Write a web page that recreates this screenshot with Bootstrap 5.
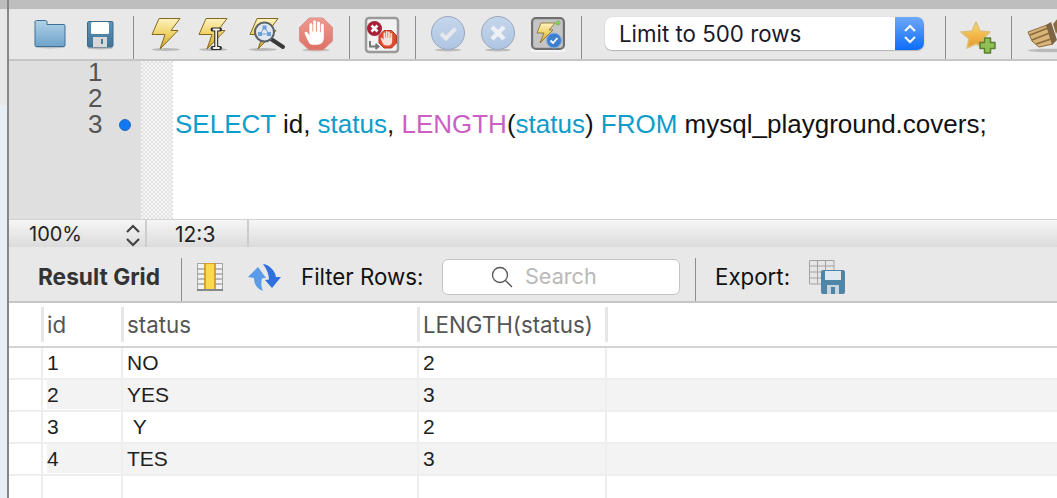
<!DOCTYPE html>
<html lang="en"><head><meta charset="utf-8"><title>Query</title>
<link href="https://cdn.jsdelivr.net/npm/bootstrap@5.3.0/dist/css/bootstrap.min.css" rel="stylesheet">
<style>
html,body{height:498px;overflow:hidden;background:#fff;font-family:"Liberation Sans",Arial,sans-serif;color:#111}
.shell{height:498px}
.sidestrip{width:7px;background:#e8eef5;background-image:linear-gradient(#bdbdbd 9px,#e8e8e8 9px,#e8e8e8 105px,#e8eef5 105px)}
.sideline{width:2px;background:#85878a}
.workarea{width:1048px;overflow:hidden}
.topbar{height:9px;background:#bebebe}
.tools{height:50px;background:#e8e8e8;padding-left:24px;gap:16px}
.slot{width:34px;height:40px;flex:none;overflow:visible;display:block}
.tsep{width:1px;margin:0 -.5px;background:#8e8e8e;height:43px;align-self:flex-end;flex:none}
.limitbox{width:319px;height:33px;flex:none;margin-left:8px;margin-right:5px;background:#fff;border-radius:7px;box-shadow:0 1px 1px #b5b5b5,0 0 1px #bbb;font-family:Inter,"Liberation Sans",sans-serif;font-size:22.3px;overflow:hidden;color:#1a1a2a}
.limitbox span{padding-left:14px}
.limitarrow{width:29px;background:linear-gradient(#6ea8f8,#0c6dfb)}
.graybar{height:2px;background:#c6c6c6}
.editor{height:159px}
.gutter{width:132px;background:#dfdfdf;color:#555;font-size:26px;line-height:22px}
.gutnum{height:26px;padding-left:79px}
.gutdot{width:12px;height:12px;border-radius:50%;background:#0f78f2;margin-left:17px;margin-top:6px;border:1px solid #2a6cb8}
.checker{width:32px;background-color:#f2f2f2;background-image:conic-gradient(#e2e2e2 25%,#f6f6f6 0 50%,#e2e2e2 0 75%,#f6f6f6 0);background-size:4px 4px}
.sqlcode{font-size:26px;line-height:26px;padding:50px 0 0 2px;white-space:nowrap;color:#111}
.kw{color:#0e9ccb}.fn{color:#cc5fc4}
.statusbar{height:28px;background:linear-gradient(#f6f6f6,#dcdcdc);border-top:1px solid #d2d2d2;font-family:Inter,"Liberation Sans",sans-serif;font-size:20px;line-height:27px;color:#222}
.zoomcell{width:138px;padding:2px 0 0 20px;border-right:2px solid #cdcdcd}
.poscell{width:102px;padding:1px 0 0 28px;font-size:21px;border-right:2px solid #cdcdcd}
.resultbar{height:54px;background:#e8e8e8;padding-top:5px;font-family:Inter,"Liberation Sans",sans-serif;font-size:22.3px;color:#111}
.rtitle{font-weight:700;font-size:22.7px;color:#333;margin-left:29px;width:143px;flex:none}
.rsep{width:1px;height:43px;background:#8e8e8e;align-self:flex-end;flex:none}
.gridglyph{margin-left:15px}
.syncglyph{margin-left:25px}
.filterlabel{margin-left:19px;width:141px}
.searchbox{width:238px;height:36px;background:#fff;border:1px solid #c4c4c4;border-radius:6px;margin-right:15px;padding-left:47px;gap:11px;color:#b9b9b9;font-size:21.6px;flex:none}
.exportlabel{margin-left:19px;width:94px}
.resultgrid{table-layout:fixed;width:1048px;border-collapse:separate;border-spacing:0;font-size:21px;color:#1f1f1f}
.resultgrid th{font-family:Inter,"Liberation Sans",sans-serif;font-size:22.3px;font-weight:400;color:#555;height:45px;padding:4px 0 0;vertical-align:top;border-bottom:2px solid #d4d4d4}
.headcell{height:35px;line-height:35px;padding-left:4px;border-right:3px solid #e6e6e6;margin-right:-1px;white-space:nowrap}
.resultgrid td{height:32px;padding:0 0 1px 4px;line-height:28px;border-right:2px solid #eee;border-bottom:2px solid #eee}
.resultgrid td:first-child{padding:0}
.resultgrid td.lastcol{border-right:0}
.resultgrid tr.alt td{background:#f3f3f3}
.resultgrid tr.alt td:first-child{background:#fff}
.resultgrid tr.alt td.idcell{background:#f3f3f3;background-clip:content-box}
.resultgrid tr.emptyrow td{border-bottom:0;height:22px}
.defsvg{width:0;height:0;display:block}
</style></head><body>
<svg class="defsvg" aria-hidden="true"><defs>
<linearGradient id="gBolt" x1="0" y1="0" x2="0" y2="1"><stop offset="0" stop-color="#fdf3c0"/><stop offset=".5" stop-color="#f0d26a"/><stop offset="1" stop-color="#cfa02c"/></linearGradient>
<linearGradient id="gFolder" x1="0" y1="0" x2="0" y2="1"><stop offset="0" stop-color="#b3d2e8"/><stop offset="1" stop-color="#6ea3ca"/></linearGradient>
<linearGradient id="gDisk" x1="0" y1="0" x2="0" y2="1"><stop offset="0" stop-color="#5f94b6"/><stop offset="1" stop-color="#3f7497"/></linearGradient>
<linearGradient id="gRound" x1="0" y1="0" x2="0" y2="1"><stop offset="0" stop-color="#c5d6ec"/><stop offset="1" stop-color="#aec5e2"/></linearGradient>
<linearGradient id="gStop" x1="0" y1="0" x2="0" y2="1"><stop offset="0" stop-color="#ee9a90"/><stop offset="1" stop-color="#de7166"/></linearGradient>
<linearGradient id="gStar" x1="0" y1="0" x2="0" y2="1"><stop offset="0" stop-color="#fbd96e"/><stop offset="1" stop-color="#e8982a"/></linearGradient>
<path id="pBolt" d="M10 4.500H31L22 16.500H29L11 35L16 20.500H3Z"/>
<path id="pHand" d="M-6 7C-8 3-9.500 0-9.500-1C-9-2.500-7.500-2-6.500-.5L-5.500 1V-7.500C-5.500-9.500-3-9.500-3-7.500V-2H-2.300V-10C-2.300-12-.2-12 0-10V-2H.8V-9C.8-11 3.300-11 3.300-9V-1.500H4V-7C4-9 6.500-9 6.500-7V3C6.500 7 4 9 1 9H-2C-4 9-5 8.500-6 7Z"/>
</defs></svg>
<div class="shell d-flex">
<div class="sidestrip flex-none"></div><div class="sideline flex-none"></div>
<div class="workarea d-flex flex-column">
<div class="topbar"></div>
<div class="tools d-flex align-items-center">
<svg class="slot" viewBox="0 0 34 40"><ellipse cx="17" cy="33" rx="15" ry="1.500" fill="#bbb"/><path d="M2 10.500V8C2 7 2.500 6.500 3.500 6.500H12.500C13.500 6.500 14 7 14 8V10.500H31C31.500 10.500 32 11 32 11.500V31C32 32 31.500 32.500 31 32.500H3C2.500 32.500 2 32 2 31Z" fill="url(#gFolder)" stroke="#3c6f97"/></svg>
<svg class="slot" viewBox="0 0 34 40"><ellipse cx="17" cy="34" rx="13" ry="1.500" fill="#bbb"/><path d="M4.500 9C4.500 8 5 7.500 6 7.500H29C29.500 7.500 30 8 30 8.500V31C30 32.500 29.500 33 28.500 33H6C5 33 4.500 32.500 4.500 31Z" fill="url(#gDisk)" stroke="#386a8b"/><rect x="8" y="8" width="18" height="12" rx="1.500" fill="#fff"/><rect x="10" y="23" width="14" height="10" fill="#d8d8d8"/><rect x="18" y="25" width="2" height="5" fill="#4b7896"/></svg>
<div class="tsep"></div>
<svg class="slot" viewBox="0 0 34 40"><ellipse cx="17" cy="35.500" rx="14" ry="1.500" fill="#b8b8b8"/><use href="#pBolt" fill="url(#gBolt)" stroke="#84691f" stroke-width="1"/></svg>
<svg class="slot" viewBox="0 0 34 40"><ellipse cx="14" cy="35.500" rx="14" ry="1.500" fill="#b8b8b8"/><use href="#pBolt" x="-3" fill="url(#gBolt)" stroke="#84691f" stroke-width="1"/><path d="M13.500 15.500H21M17.200 15.500V34M13.500 34H21" stroke="#2b2b2b" stroke-width="4" fill="none" stroke-linecap="round"/><path d="M14.500 15.500H20M17.200 15.500V34M14.500 34H20" stroke="#f4f1e6" stroke-width="1.800" fill="none" stroke-linecap="round"/></svg>
<svg class="slot" viewBox="0 0 34 40"><ellipse cx="14" cy="35.500" rx="14" ry="1.500" fill="#b8b8b8"/><use href="#pBolt" x="-2" fill="url(#gBolt)" stroke="#84691f" stroke-width="1"/><path d="M22 25L34 33" stroke="#3a3a3a" stroke-width="4" stroke-linecap="round"/><circle cx="15.500" cy="18" r="9.500" fill="#dfe7ef" stroke="#5a6068" stroke-width="2"/><path d="M15.500 13.500L11 20M15.500 13.500L20 20M11 20H20" stroke="#7aa0cc" stroke-width="1"/><rect x="13.500" y="11.500" width="4" height="4" fill="#6f9fd8"/><rect x="9" y="18" width="4" height="4" fill="#6f9fd8"/><rect x="18" y="18" width="4" height="4" fill="#6f9fd8"/></svg>
<svg class="slot" viewBox="0 0 34 40"><ellipse cx="17" cy="36" rx="14" ry="1.500" fill="#c4c4c4"/><path d="M10 4H24L33.500 13.500V27L24 36H10L.5 27V13.500Z" fill="url(#gStop)" stroke="#d9938b"/><use href="#pHand" transform="translate(17 20) scale(1.200)" fill="#fff"/></svg>
<div class="tsep"></div>
<svg class="slot" viewBox="0 0 34 40"><rect x="1" y="4" width="32" height="34" rx="3" fill="#f2f2f2" stroke="#9a9a9a" stroke-width="2.500"/><path d="M5 27V32.500H13M10.500 30L13.500 32.500L10.500 35" fill="none" stroke="#777" stroke-width="2"/><circle cx="9.500" cy="14.500" r="7.500" fill="#a81f38"/><path d="M6.500 11.500L12.500 17.500M12.500 11.500L6.500 17.500" stroke="#fff" stroke-width="2.600"/><path d="M19 16.500H26.500L31.500 21.500V29L26.500 34H19L14 29V21.500Z" fill="#e04a2f" stroke="#b8351f"/><use href="#pHand" transform="translate(22.500 25) scale(.72)" fill="#f6e0da"/></svg>
<div class="tsep"></div>
<svg class="slot" viewBox="0 0 34 40"><ellipse cx="17" cy="36" rx="13" ry="1.500" fill="#bbb"/><circle cx="17" cy="19" r="16.500" fill="url(#gRound)" stroke="#9aa7bb"/><path d="M10 19.500L15 24.500L24.500 14.500" fill="none" stroke="#e6e8ec" stroke-width="4"/></svg>
<svg class="slot" viewBox="0 0 34 40"><ellipse cx="17" cy="36" rx="13" ry="1.500" fill="#bbb"/><circle cx="17" cy="19" r="16.500" fill="url(#gRound)" stroke="#9aa7bb"/><path d="M11 13L23 25M23 13L11 25" stroke="#eef0f3" stroke-width="4.500"/></svg>
<svg class="slot" viewBox="0 0 34 40"><rect x="0" y="35" width="34" height="3" fill="#f5f5f5"/><rect x="1" y="4" width="32" height="31" rx="4" fill="#b4b4b4" stroke="#6f6f6f" stroke-width="2"/><rect x="3" y="6" width="28" height="27" rx="2" fill="#c5c5c5"/><path d="M10 9H24L18 16H22L9 29L13 19H6Z" fill="url(#gBolt)" stroke="#84691f" stroke-width=".8"/><circle cx="23" cy="26.500" r="7.500" fill="#3f7fd2" stroke="#8fb3df"/><path d="M19.500 26.500L22 29L26.500 24" fill="none" stroke="#fff" stroke-width="1.800"/><circle cx="27" cy="9" r="2.300" fill="#7fd04b" stroke="#9a9a9a" stroke-width=".5"/></svg>
<div class="tsep"></div>
<div class="limitbox d-flex align-items-center justify-content-between"><span>Limit to 500 rows</span>
<div class="limitarrow h-100 d-flex align-items-center justify-content-center"><svg width="14" height="22" viewBox="0 0 14 22"><path d="M2 8L7 3L12 8M2 14L7 19L12 14" fill="none" stroke="#fff" stroke-width="2"/></svg></div></div>
<div class="tsep"></div>
<svg class="slot" viewBox="0 0 34 40"><path d="M15 8L19 17L29 18L22 25L24 34L15 30L6 34L8 25L0 18L11 17Z" fill="url(#gStar)" stroke="#dcc07a" stroke-width="1.500" stroke-linejoin="round"/><path d="M23.500 24H29.500V28.500H34V34.500H29.500V39H23.500V34.500H19V28.500H23.500Z" fill="#8fbf55" stroke="#5a7f30" stroke-width="1.500" stroke-linejoin="round"/></svg>
<div class="tsep"></div>
<svg class="slot" viewBox="0 0 34 40"><ellipse cx="25" cy="36.500" rx="24" ry="1.800" fill="#bbb"/><path d="M1 18L20 11L26 30L12 33L5 27Z" fill="#d8b47a" stroke="#8a6b3c"/><path d="M21 14L3 21M22.500 19L5 26M24 25L9 30" stroke="#8a6b3c" stroke-width="1.600"/><path d="M19 11L24 8L30 26L25 31Z" fill="#7d6544"/><path d="M26 10L31 4L36 6L29 20Z" fill="#8a6d3f"/></svg>
</div>
<div class="graybar"></div>
<div class="editor d-flex">
<div class="gutter flex-none"><div class="gutnum">1</div><div class="gutnum">2</div><div class="gutnum d-flex">3<div class="gutdot"></div></div></div>
<div class="checker flex-none"></div>
<div class="sqlcode"><span class="kw">SELECT</span> id, <span class="kw">status</span>, <span class="fn">LENGTH</span>(<span class="kw">status</span>) <span class="kw">FROM</span> mysql_playground.covers;</div>
</div>
<div class="statusbar d-flex">
<div class="zoomcell d-flex align-items-center justify-content-between"><span>100%</span><svg class="me-1" width="16" height="26" viewBox="0 0 16 26"><path d="M2 10L8 4L14 10M2 17L8 23L14 17" fill="none" stroke="#444" stroke-width="2.200"/></svg></div>
<div class="poscell">12:3</div>
</div>
<div class="resultbar d-flex align-items-center">
<div class="rtitle">Result Grid</div><div class="rsep"></div>
<svg class="gridglyph flex-none" width="26" height="28" viewBox="0 0 26 28"><rect x=".5" y=".5" width="25" height="26" fill="#f2f2f2" stroke="#a5a5a5"/><path d="M0 6H26M0 11H26M0 16H26M0 21H26" stroke="#a5a5a5" stroke-width="1.500"/><rect x="8" y="0" width="10" height="27" fill="#fbd94f" stroke="#d18a1c" stroke-width="1.500"/><rect x="0" y="26" width="26" height="2" fill="#888"/></svg>
<svg class="syncglyph flex-none" width="34" height="28" viewBox="0 0 34 28"><path d="M10 4L0 14L6 15C6 21 9 26 15 28C13 24 13 19 14 15.500L18 15Z" fill="#5b9be8"/><path d="M24 25L17 17L21 16.500C21 12 19 6 15 1C22 2 27 8 28 14L33 14Z" fill="#2f6fe0"/></svg>
<div class="filterlabel flex-none">Filter Rows:</div>
<div class="searchbox d-flex align-items-center"><svg width="24" height="24" viewBox="0 0 24 24"><circle cx="10" cy="10" r="7.500" fill="none" stroke="#555" stroke-width="1.300"/><path d="M15.500 15.500L22 22" stroke="#555" stroke-width="1.300"/></svg><span>Search</span></div>
<div class="rsep"></div>
<div class="exportlabel flex-none">Export:</div>
<svg class="flex-none" width="37" height="34" viewBox="0 0 37 34"><path d="M.5 .5H25V24H.5ZM.5 6H25M.5 12H25M.5 18H25M8.500 .5V24M16.500 .5V24" fill="#e6e6e6" stroke="#a2a2a2"/><rect x="12" y="10" width="24" height="24" rx="2" fill="#4f86a8"/><rect x="16" y="11" width="16" height="9" fill="#dfe9f0"/><rect x="18" y="25" width="12" height="9" fill="#c9d5dc"/><rect x="22" y="27" width="4" height="7" fill="#4f86a8"/></svg>
</div>
<div class="graybar"></div>
<table class="resultgrid">
<colgroup><col style="width:34px"><col style="width:80px"><col style="width:296px"><col style="width:188px"><col></colgroup>
<thead><tr><th><div class="headcell"></div></th><th><div class="headcell">id</div></th><th><div class="headcell">status</div></th><th><div class="headcell">LENGTH(status)</div></th><th></th></tr></thead>
<tbody>
<tr><td></td><td class="idcell">1</td><td>NO</td><td>2</td><td class="lastcol"></td></tr>
<tr class="alt"><td></td><td class="idcell">2</td><td>YES</td><td>3</td><td class="lastcol"></td></tr>
<tr><td></td><td class="idcell">3</td><td>&nbsp;Y</td><td>2</td><td class="lastcol"></td></tr>
<tr class="alt"><td></td><td class="idcell">4</td><td>TES</td><td>3</td><td class="lastcol"></td></tr>
<tr class="emptyrow"><td></td><td></td><td></td><td></td><td class="lastcol"></td></tr>
</tbody></table>
</div></div>
</body></html>
